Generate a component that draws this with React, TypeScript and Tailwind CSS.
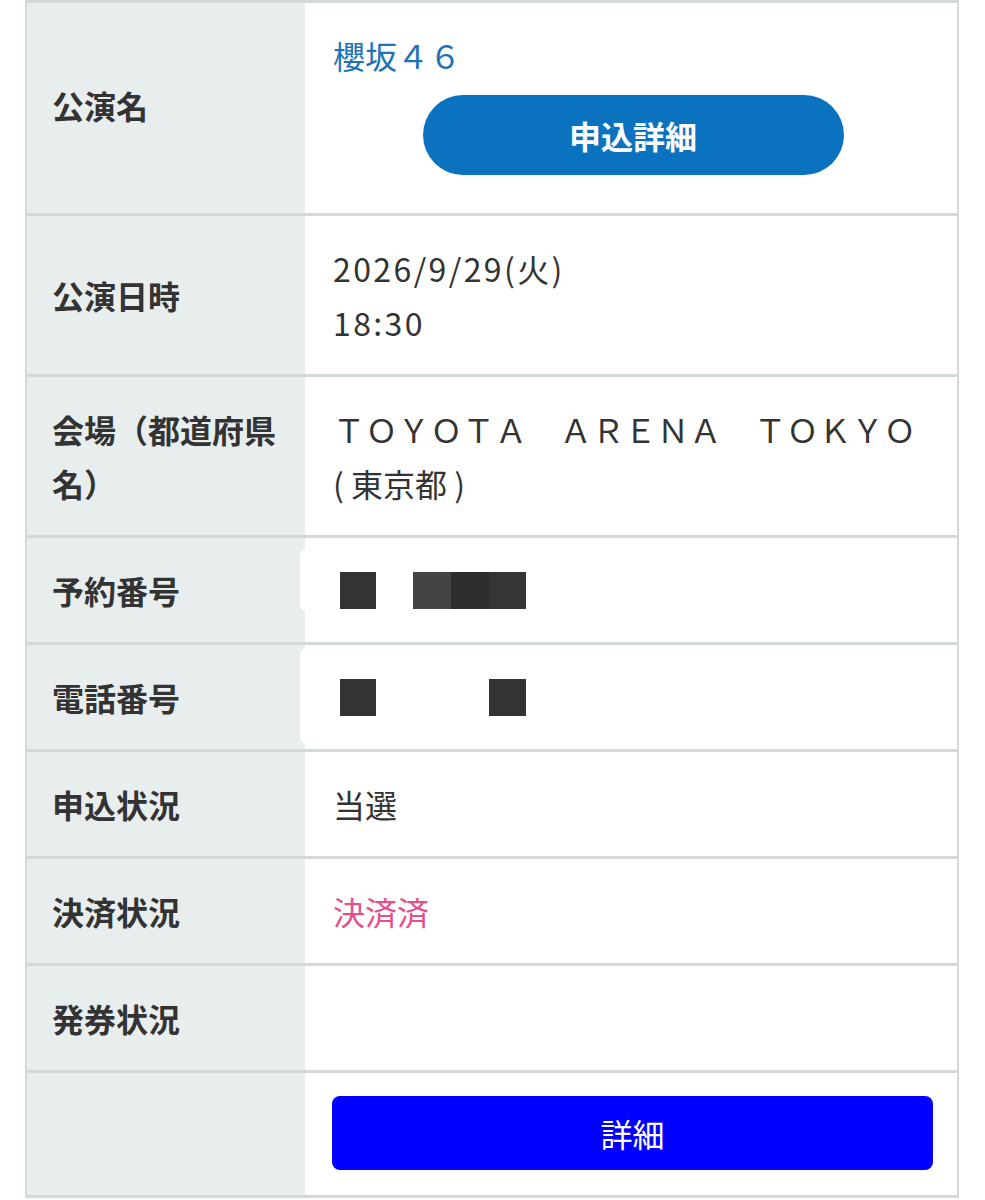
import React from "react";

const font = { fontFamily: '"Noto Sans CJK JP", "Noto Sans", sans-serif' };

function Row({ label, children, last }: { label?: React.ReactNode; children: React.ReactNode; last?: boolean }) {
  return (
    <div className={`flex ${last ? "" : "border-b-[3px] border-[#d3d9d9]"}`}>
      <div className="w-[278px] shrink-0 bg-[#e8eded] pl-[25px] pr-2 py-[25px] flex items-center text-[32px] leading-[54px] font-bold text-[#333]">
        <div>{label}</div>
      </div>
      <div className="flex-1 bg-white pl-[28px] pr-[24px] py-[25px] text-[32px] leading-[54px] text-[#333]">
        {children}
      </div>
    </div>
  );
}

function Redact({ w, shade = "#333" }: { w: number; shade?: string }) {
  return <span className="inline-block h-[37px] align-middle" style={{ width: w, background: shade }} />;
}

export default function App() {
  return (
    <div className="w-[985px] h-[1200px] bg-white overflow-hidden" style={font}>
      <div className="ml-[25px] w-[934px] border-x-2 border-t-[3px] border-b-[3px] border-[#d3d9d9]">
        <div className="flex border-b-[3px] border-[#d3d9d9]">
          <div className="w-[278px] shrink-0 bg-[#e8eded] pl-[25px] flex items-center text-[32px] font-bold text-[#333] pb-[6px]">
            公演名
          </div>
          <div className="flex-1 bg-white pl-[28px] pr-[24px] pt-[25px] pb-[38px]">
            <div className="text-[32px] leading-[54px] text-[#1f72b6]">櫻坂４６</div>
            <div className="mt-[13px] flex justify-center">
              <div className="w-[421px] h-[80px] rounded-full bg-[#0a72bf] flex items-center justify-center text-white text-[32px] font-bold">
                申込詳細
              </div>
            </div>
          </div>
        </div>
        <Row label="公演日時">
          <div className="tracking-[2.4px]">2026/9/29(火)</div>
          <div className="tracking-[2.4px]">18:30</div>
        </Row>
        <Row label={<>会場（都道府県<br />名）</>}>
          <div className="whitespace-nowrap tracking-[0.4px]">ＴＯＹＯＴＡ　ＡＲＥＮＡ　ＴＯＫＹＯ</div>
          <div>( 東京都 )</div>
        </Row>
        <Row label="予約番号">
          <div className="relative flex items-center h-[54px] gap-[37px] pl-[5px]">
            <div className="absolute -left-[33px] -top-[14px] w-[40px] h-[62px] bg-white rounded-l-[6px]" />
            <Redact w={38} />
            <span className="inline-flex">
              <Redact w={38} shade="#444" />
              <Redact w={38} shade="#2e2e2e" />
              <Redact w={37} shade="#353535" />
            </span>
          </div>
        </Row>
        <Row label="電話番号">
          <div className="relative flex items-center h-[54px] gap-[113px] pl-[5px]">
            <div className="absolute -left-[33px] -top-[22px] w-[40px] h-[96px] bg-white rounded-l-[6px]" />
            <Redact w={38} />
            <Redact w={37} />
          </div>
        </Row>
        <Row label="申込状況">
          <div>当選</div>
        </Row>
        <Row label="決済状況">
          <div className="text-[#e2508c]">決済済</div>
        </Row>
        <Row label="発券状況">
          <div>&nbsp;</div>
        </Row>
        <div className="flex">
          <div className="w-[278px] shrink-0 bg-[#e8eded]" />
          <div className="flex-1 bg-white pl-[27px] pr-[24px] pt-[23px] pb-[25px]">
            <div className="h-[74px] rounded-[8px] bg-[#0000ff] flex items-center justify-center text-white text-[32px]">
              詳細
            </div>
          </div>
        </div>
      </div>
    </div>
  );
}
